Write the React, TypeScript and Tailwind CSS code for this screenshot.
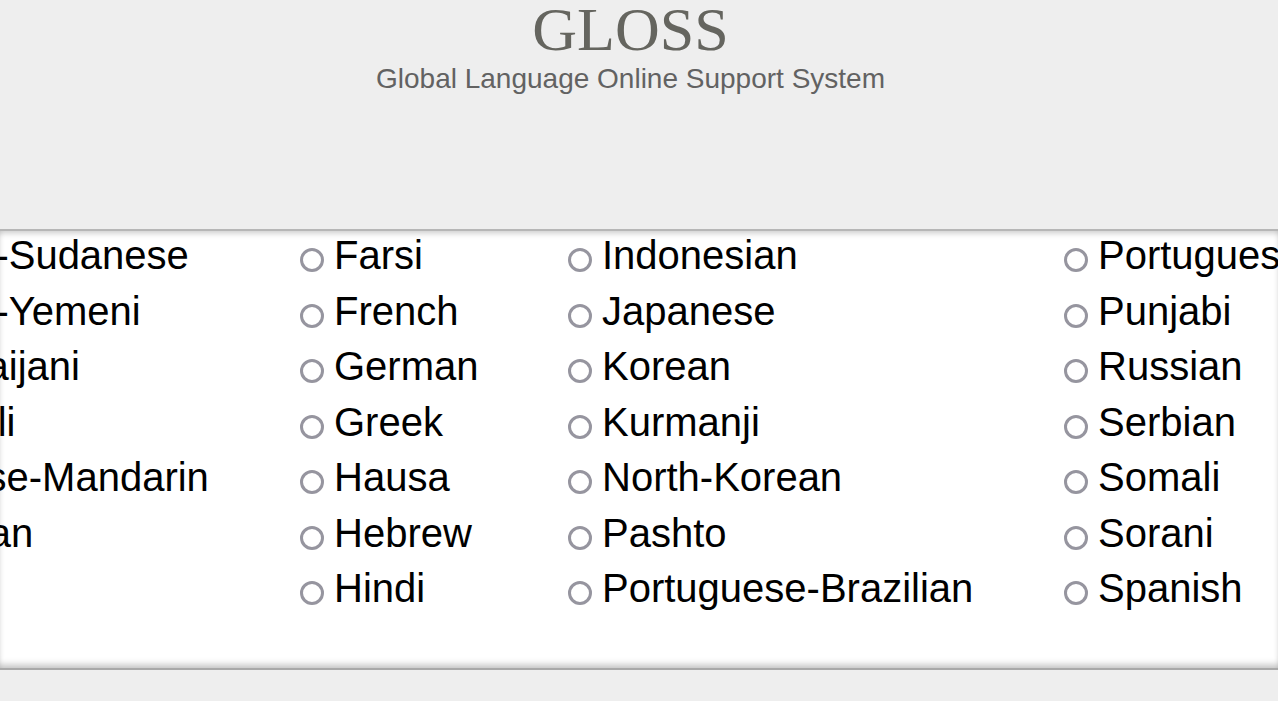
const columns: { width: string; items: string[] }[] = [
  {
    width: "w-[452px]",
    items: [
      "Arabic-Sudanese",
      "Arabic-Yemeni",
      "Azerbaijani",
      "Bengali",
      "Chinese-Mandarin",
      "Croatian",
    ],
  },
  {
    width: "w-[268px]",
    items: ["Farsi", "French", "German", "Greek", "Hausa", "Hebrew", "Hindi"],
  },
  {
    width: "w-[496px]",
    items: [
      "Indonesian",
      "Japanese",
      "Korean",
      "Kurmanji",
      "North-Korean",
      "Pashto",
      "Portuguese-Brazilian",
    ],
  },
  {
    width: "w-[400px]",
    items: [
      "Portuguese-European",
      "Punjabi",
      "Russian",
      "Serbian",
      "Somali",
      "Sorani",
      "Spanish",
    ],
  },
];

function LanguageOption({ name }: { name: string }) {
  return (
    <label className="flex h-[55.5px] items-center whitespace-nowrap">
      <span className="mr-[10px] mt-[9px] h-[24px] w-[24px] shrink-0 rounded-full border-[3px] border-[#96959f] bg-white" />
      <span className="text-[40px] leading-[55.5px] text-black">{name}</span>
    </label>
  );
}

export default function App() {
  return (
    <div className="flex h-[701px] w-full flex-col overflow-hidden bg-[#eeeeee] font-['Liberation_Sans',Arial,sans-serif]">
      <header className="flex h-[229px] shrink-0 flex-col items-center pr-[17px]">
        <h1 className="font-['Liberation_Serif','Times_New_Roman',serif] text-[62px] font-normal leading-[58px] text-[#65655f]">
          GLOSS
        </h1>
        <p className="mt-[5px] text-[28px] leading-[32px] text-[#626262]">
          Global Language Online Support System
        </p>
      </header>

      <main className="h-[441px] shrink-0 overflow-hidden border-y-2 border-t-[#b6b6b6] border-b-[#a9a9a9] bg-white shadow-[inset_0_5px_6px_-3px_rgba(0,0,0,0.22),inset_0_-6px_7px_-3px_rgba(0,0,0,0.25)]">
        <div className="ml-[-152px] mt-[-3px] flex">
          {columns.map((col, i) => (
            <div key={i} className={`${col.width} shrink-0`}>
              {col.items.map((name) => (
                <LanguageOption key={name} name={name} />
              ))}
            </div>
          ))}
        </div>
      </main>

      <footer className="flex-1 bg-[#eeeeee]" />
    </div>
  );
}
